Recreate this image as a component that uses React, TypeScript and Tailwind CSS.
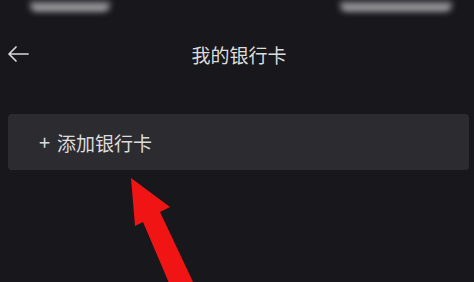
function StatusBar() {
  return (
    <div className="flex h-[12px] items-start justify-between px-[30px]">
      <div className="h-[11px] w-[80px] rounded-b-md bg-gradient-to-b from-[#3a3a3e] via-[#8a8a8e] to-[#e0e0e0] blur-[3px]" />
      <div className="mr-[-8px] h-[11px] w-[112px] rounded-b-md bg-gradient-to-b from-[#3a3a3e] via-[#8a8a8e] to-[#d8d8d8] blur-[3px]" />
    </div>
  )
}

function BackIcon() {
  return (
    <svg width="22" height="18" viewBox="0 0 22 18" className="ml-[7px]" fill="none">
      <path d="M21 9H2M9 2 2 9l7 7" stroke="#d8d8d8" strokeWidth="1.7" strokeLinecap="round" strokeLinejoin="round" />
    </svg>
  )
}

function RedArrow() {
  return (
    <svg width="110" height="120" viewBox="0 0 110 120" className="block">
      <polygon points="31,8 70,37 60,42 94,114 72,120 43,52 35,56" fill="#f01414" />
    </svg>
  )
}

export default function App() {
  return (
    <main
      className="h-[282px] w-[474px] overflow-hidden bg-[#18171c] text-[#dcdcdc]"
      style={{ fontFamily: '"Noto Sans CJK SC", "Noto Sans", sans-serif' }}
    >
      <StatusBar />

      <header className="relative mt-[26px] flex h-[32px] items-center">
        <BackIcon />
        <h1 className="absolute left-[4px] right-0 text-center text-[19px] leading-none">我的银行卡</h1>
      </header>

      <div className="mx-[8px] mt-[44px] flex h-[56px] w-[461px] items-center rounded-[4px] bg-[#2c2b30] pl-[31px] text-[19px]">
        <span className="mr-[7px] text-[20px] leading-none">+</span>
        <span className="leading-none">添加银行卡</span>
      </div>

      <div className="ml-[100px]">
        <RedArrow />
      </div>
    </main>
  )
}
